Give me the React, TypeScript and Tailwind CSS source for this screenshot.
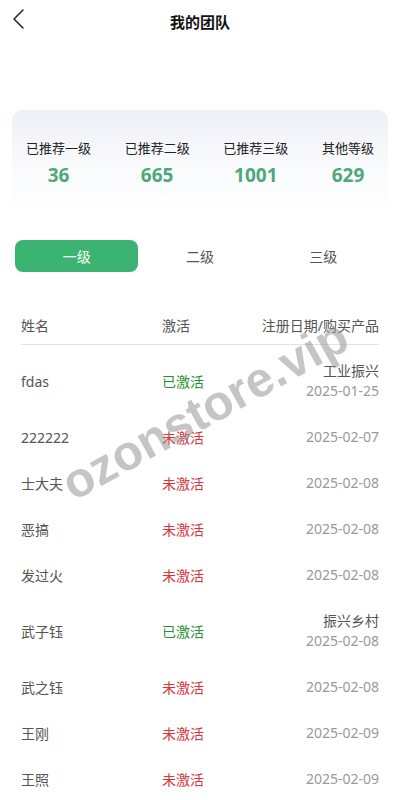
import React from 'react';

const stats = [
  { label: '已推荐一级', value: '36' },
  { label: '已推荐二级', value: '665' },
  { label: '已推荐三级', value: '1001' },
  { label: '其他等级', value: '629' },
];

const rows = [
  { name: 'fdas', active: true, product: '工业振兴', date: '2025-01-25' },
  { name: '222222', active: false, date: '2025-02-07' },
  { name: '士大夫', active: false, date: '2025-02-08' },
  { name: '恶搞', active: false, date: '2025-02-08' },
  { name: '发过火', active: false, date: '2025-02-08' },
  { name: '武子钰', active: true, product: '振兴乡村', date: '2025-02-08' },
  { name: '武之钰', active: false, date: '2025-02-08' },
  { name: '王刚', active: false, date: '2025-02-09' },
  { name: '王照', active: false, date: '2025-02-09' },
];

export default function App() {
  return (
    <div className="relative w-[400px] h-[800px] overflow-hidden bg-white font-['Noto_Sans','Noto_Sans_CJK_SC',sans-serif]">
      {/* Header */}
      <div className="relative h-[44px] flex items-center justify-center">
        <svg className="absolute left-[10px] top-[7px]" width="20" height="24" viewBox="0 0 20 24" fill="none">
          <polyline points="13,3 4,12 13,21" stroke="#222" strokeWidth="1.5" strokeLinecap="round" strokeLinejoin="round" />
        </svg>
        <h1 className="text-[15px] font-bold text-[#111]">我的团队</h1>
      </div>

      {/* Stats card */}
      <div className="mx-3 mt-[66px] h-[105px] rounded-[10px] bg-gradient-to-b from-[#eef0f8] via-[#f9fafc] to-white px-[14px] pt-[29px] flex justify-between">
        {stats.map((s) => (
          <div key={s.label} className="flex flex-col items-center">
            <span className="text-[13px] leading-[18px] text-[#222]">{s.label}</span>
            <span className="mt-[6px] text-[19px] leading-[24px] font-bold text-[#4fa87a]">{s.value}</span>
          </div>
        ))}
      </div>

      {/* Tabs */}
      <div className="mt-[25px] px-[15px] grid grid-cols-3 h-8">
        <div className="rounded-[8px] bg-[#3cb370] text-white text-[14px] flex items-center justify-center">一级</div>
        <div className="text-[14px] text-[#555] flex items-center justify-center">二级</div>
        <div className="text-[14px] text-[#555] flex items-center justify-center">三级</div>
      </div>

      {/* Table */}
      <div className="mt-[34px] mx-[21px]">
        <div className="h-[39px] flex items-center border-b border-[#e3e3e3] text-[14px] text-[#555]">
          <span className="w-[141px]">姓名</span>
          <span>激活</span>
          <span className="ml-auto">注册日期/购买产品</span>
        </div>
        <div className="pt-[3px]">
          {rows.map((r, i) => (
            <div key={i} className={`flex items-center text-[14px] ${r.product ? 'h-[66px]' : 'h-[46px]'}`}>
              <span className="w-[141px] text-[#555]">{r.name}</span>
              <span className={r.active ? 'text-[#2a9134]' : 'text-[#d8363d]'}>{r.active ? '已激活' : '未激活'}</span>
              <div className="ml-auto flex flex-col items-end leading-[20px]">
                {r.product && <span className="text-[#555]">{r.product}</span>}
                <span className="text-[#999]">{r.date}</span>
              </div>
            </div>
          ))}
        </div>
      </div>

      {/* Watermark */}
      <div className="absolute left-[205px] top-[410px] -translate-x-1/2 -translate-y-1/2 -rotate-[29deg] pointer-events-none whitespace-nowrap text-[49px] font-bold text-[rgba(150,150,150,0.55)] font-['Liberation_Sans',sans-serif]">
        ozonstore.vip
      </div>
    </div>
  );
}
